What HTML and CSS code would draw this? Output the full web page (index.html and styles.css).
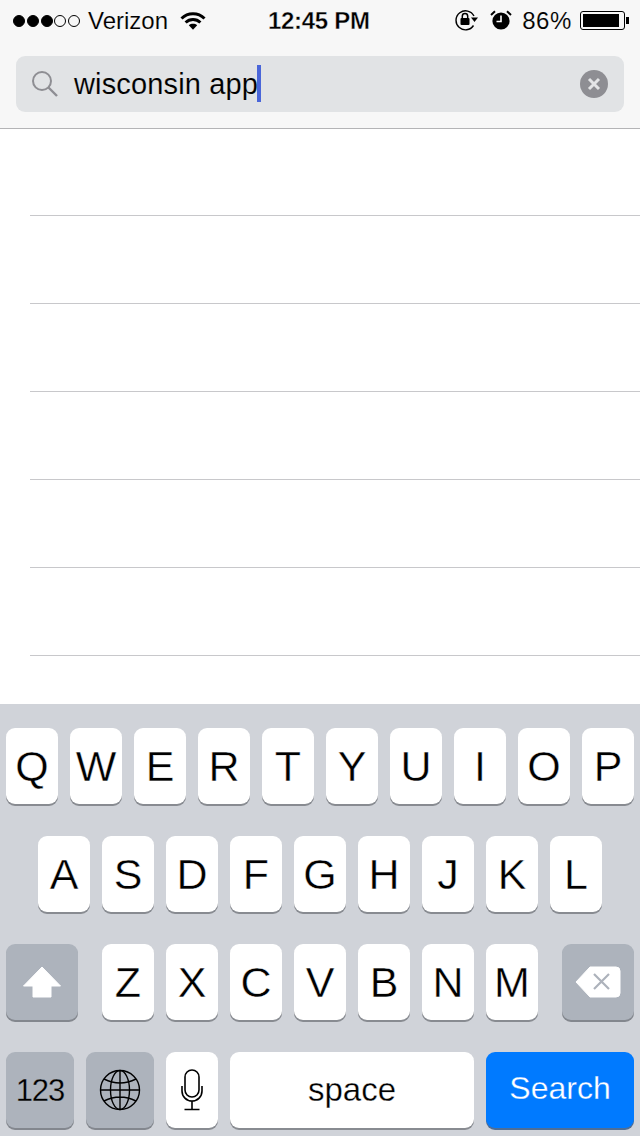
FILE: index.html
```html
<!DOCTYPE html>
<html lang="en">
<head>
<meta charset="utf-8">
<title>Search</title>
<link rel="stylesheet" href="styles.css">
</head>
<body>
<div class="phone">
  <header class="top">
    <div class="status">
      <div class="status-left">
        <span class="signal"><i class="dot on"></i><i class="dot on"></i><i class="dot on"></i><i class="dot"></i><i class="dot"></i></span>
        <span class="carrier">Verizon</span>
        <svg class="wifi" width="26" height="18" viewBox="0 0 26 18"><path d="M1.500 6.500C7.800 .2 18.200 .2 24.500 6.500" fill="none" stroke="#000" stroke-width="3"/><path d="M5.600 10.500C9.700 6.600 16.300 6.600 20.400 10.500" fill="none" stroke="#000" stroke-width="3"/><path d="M8.800 13.200C11.200 11.300 14.800 11.300 17.200 13.200L13 17.800Z" fill="#000"/></svg>
      </div>
      <div class="time">12:45 PM</div>
      <div class="status-right">
        <svg class="lock" width="25" height="22" viewBox="0 0 25 22"><path d="M19.500 16.500A9.500 9.500 0 1 1 20 7" fill="none" stroke="#000" stroke-width="1.400"/><path d="M17 8.500h7l-3.500 4.500Z" fill="#000"/><rect x="6.500" y="9" width="9" height="7" rx="1" fill="#000"/><path d="M8.300 9V7.200a2.700 2.700 0 0 1 5.400 0V9" fill="none" stroke="#000" stroke-width="1.500"/></svg>
        <svg class="alarm" width="22" height="20" viewBox="0 0 22 20"><circle cx="11" cy="11" r="8.600" fill="#000"/><path d="M11 5.500V11.500H6.500" fill="none" stroke="#fff" stroke-width="1.600"/><path d="M1 5L5 1.200M21 5L17 1.200" stroke="#000" stroke-width="2"/></svg>
        <span class="percent">86%</span>
        <span class="battery"><span class="battery-fill"></span></span><span class="nub"></span>
      </div>
    </div>
    <div class="searchbar">
      <svg class="glass" width="28" height="28" viewBox="0 0 28 28"><circle cx="11" cy="11" r="9" fill="none" stroke="#8e8e93" stroke-width="2"/><path d="M17.500 17.500L26 26" stroke="#8e8e93" stroke-width="2.400"/></svg>
      <span class="query">wisconsin app</span><span class="cursor"></span>
      <svg class="clear" width="28" height="28" viewBox="0 0 28 28"><circle cx="14" cy="14" r="14" fill="#8e8e93"/><path d="M9 9L19 19M19 9L9 19" stroke="#e4e5e7" stroke-width="3"/></svg>
    </div>
  </header>

  <main class="list">
    <div class="row"></div>
    <div class="row"></div>
    <div class="row"></div>
    <div class="row"></div>
    <div class="row"></div>
    <div class="row"></div>
    <div class="row"></div>
  </main>

  <section class="keyboard">
    <div class="keyrow">
      <div class="key">Q</div><div class="key">W</div><div class="key">E</div><div class="key">R</div><div class="key">T</div><div class="key">Y</div><div class="key">U</div><div class="key">I</div><div class="key">O</div><div class="key">P</div>
    </div>
    <div class="keyrow">
      <div class="key">A</div><div class="key">S</div><div class="key">D</div><div class="key">F</div><div class="key">G</div><div class="key">H</div><div class="key">J</div><div class="key">K</div><div class="key">L</div>
    </div>
    <div class="keyrow">
      <div class="key dark wide shift-key">
        <svg width="38" height="32" viewBox="0 0 38 32"><path d="M19 1L37.500 20H28V31H10V20H.5Z" fill="#fff" stroke="#fff" stroke-linejoin="round" stroke-width="1"/></svg>
      </div>
      <div class="key">Z</div><div class="key">X</div><div class="key">C</div><div class="key">V</div><div class="key">B</div><div class="key">N</div><div class="key">M</div>
      <div class="key dark wide delete-key">
        <svg width="46" height="32" viewBox="0 0 46 32"><path d="M15 1H41Q45 1 45 5V27Q45 31 41 31H15L1 16Z" fill="#fff" stroke="#fff" stroke-linejoin="round"/><path d="M19 8L34 23M34 8L19 23" stroke="#adb2bb" stroke-width="2.200"/></svg>
      </div>
    </div>
    <div class="keyrow">
      <div class="key dark mode num">123</div>
      <div class="key dark mode">
        <svg width="42" height="42" viewBox="0 0 42 42" fill="none" stroke="#000" stroke-width="1.400"><circle cx="21" cy="21" r="19.500"/><ellipse cx="21" cy="21" rx="9.500" ry="19.500"/><path d="M21 1.500V40.500M1.500 21H40.500M5 10Q21 18 37 10M5 32Q21 24 37 32"/></svg>
      </div>
      <div class="key">
        <svg width="22" height="42" viewBox="0 0 22 42" fill="none" stroke="#000" stroke-width="1.600"><rect x="4" y="1" width="14" height="27" rx="7"/><path d="M1 17V22A10 10 0 0 0 21 22V17M11 32V40M3.500 40.500H18.500"/></svg>
      </div>
      <div class="key space">space</div>
      <div class="key search">Search</div>
    </div>
  </section>
</div>
</body>
</html>
```
FILE: styles.css
```css
* { box-sizing: border-box; }
html, body { margin: 0; padding: 0; }
body { font-family: "Liberation Sans", Arial, sans-serif; color: #000; background: #fff; }
.phone { width: 640px; height: 1136px; display: flex; flex-direction: column; overflow: hidden; }

.top { height: 129px; background: #f7f7f7; border-bottom: 1px solid #b4b4b6; flex: none; }
.status { height: 40px; display: grid; grid-template-columns: 1fr auto 1fr; align-items: center; font-size: 24px; padding: 1px 0 0; }
.status-left { display: flex; align-items: center; padding-left: 13px; }
.signal { display: flex; gap: 1.800px; width: 68px; }
.dot { width: 12px; height: 12px; border-radius: 50%; border: 1px solid #000; flex: none; }
.dot.on { background: #000; }
.carrier { margin-left: 7px; -webkit-text-stroke: .12px #f7f7f7; }
.wifi { margin-left: 12px; }
.time { font-weight: bold; width: 102px; white-space: nowrap; letter-spacing: -.3px; -webkit-text-stroke: .35px #f7f7f7; position: relative; left: -1px; }
.status-right { display: flex; align-items: center; justify-content: flex-end; padding-right: 11px; }
.lock { margin-top: -1px; }
.alarm { margin-left: 11px; margin-top: -1px; }
.percent { margin-left: 10px; letter-spacing: .6px; -webkit-text-stroke: .12px #f7f7f7; }
.battery { margin-left: 8px; width: 45px; height: 19px; border: 1px solid #000; border-radius: 3px; padding: 2px; display: block; margin-top: -1px; }
.battery-fill { display: block; width: 36px; height: 13px; background: #000; }
.nub { width: 3px; height: 7px; background: #000; margin: -1px 0 0 1px; }

.searchbar { margin: 16px 16px 0; height: 56px; background: #e1e3e5; border-radius: 9px; display: flex; align-items: center; padding: 0 16px 0 15px; }
.glass { flex: none; }
.query { font-size: 29px; margin: 0 0 0 15px; white-space: nowrap; letter-spacing: .15px; -webkit-text-stroke: .12px #e1e3e5; }
.cursor { width: 4px; height: 37px; background: #4a66d9; margin: -2px 0 0 -1px; flex: none; }
.clear { margin-left: auto; }

.list { flex: 1; overflow: hidden; background: #fff; }
.row { height: 88px; margin-left: 30px; border-bottom: 1px solid #c8c8cb; }
.row:first-child { height: 87px; }

.keyboard { height: 432px; flex: none; background: #d0d3d9; padding: 24px 6px 0; display: flex; flex-direction: column; gap: 32px; }
.keyrow { display: flex; justify-content: center; gap: 12px; height: 76px; }
.key { width: 52px; height: 76px; background: #fff; border-radius: 9px; box-shadow: 0 2px 0 #888b91; display: flex; align-items: center; justify-content: center; font-size: 43px; flex: none; -webkit-text-stroke: .4px #fff; }
.dark { background: #adb3bc; box-shadow: 0 2px 0 #83878e; -webkit-text-stroke: .3px #adb3bc; }
.wide { width: 72px; }
.shift-key { margin-right: 12px; }
.delete-key { margin-left: 12px; }
.mode { width: 68px; }
.num { font-size: 31px; letter-spacing: -1px; padding-top: 2px; }
.space { width: 244px; font-size: 33px; -webkit-text-stroke: .3px #fff; padding-bottom: 1px; }
.search { width: 148px; background: #007aff; color: #fff; font-size: 32px; box-shadow: 0 2px 0 #4e6e96; -webkit-text-stroke: .3px #007aff; padding-bottom: 3px; }
```
